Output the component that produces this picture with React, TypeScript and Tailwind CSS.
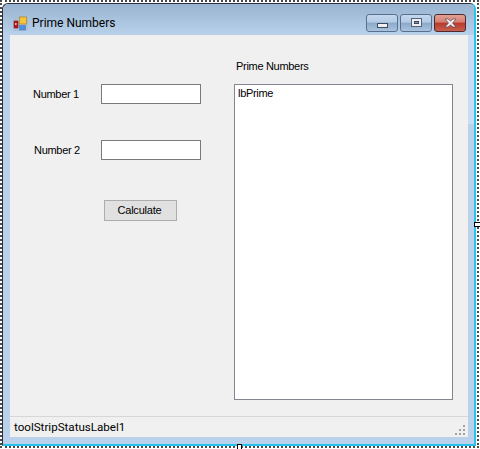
import React from 'react';

const uiFont = 'font-["Liberation_Sans",Arial,sans-serif]';
const captionFont = 'font-["Roboto","Noto_Sans",sans-serif]';

function AppIcon() {
  return (
    <svg width="15" height="15" viewBox="0 0 15 15" className="shrink-0">
      <rect x="0" y="0" width="15" height="15" fill="#a9bdd6" opacity="0.6" />
      <rect x="1" y="5" width="4" height="7" fill="#b5151a" stroke="#7d1d20" strokeWidth="0.6" />
      <rect x="2" y="7" width="1.6" height="2" fill="#f3b4a8" />
      <rect x="6.5" y="1" width="7" height="7" fill="#f6c539" stroke="#b08a2a" strokeWidth="0.8" />
      <rect x="6.5" y="9.5" width="6" height="4.5" fill="#4d8fe0" stroke="#4f78b4" strokeWidth="0.6" />
    </svg>
  );
}

function CaptionButton({ kind }: { kind: 'min' | 'max' | 'close' }) {
  if (kind === 'close') {
    return (
      <div className="flex h-[18px] w-[32px] items-center justify-center rounded-[3px] border border-[#50282e] bg-[linear-gradient(#e2a195_0%,#d47f70_45%,#b8392a_50%,#c8604e_100%)]">
        <svg width="13" height="10" viewBox="0 0 13 10">
          <path d="M1 1h3l2.5 2L9 1h3L8.5 5 12 9H9L6.5 7 4 9H1l3.5-4z" fill="#f0eff2" stroke="#5a4a52" strokeWidth="0.7" />
        </svg>
      </div>
    );
  }
  return (
    <div className="flex h-[18px] w-[32px] items-center justify-center rounded-[3px] border border-[#5a6e8e] bg-[linear-gradient(#c4d8ee_0%,#b3cbe5_45%,#8ba8c8_50%,#aac4e0_100%)]">
      {kind === 'min' ? (
        <div className="mt-[4px] h-[5px] w-[11px] border border-[#3c4a5e] bg-[#f0f0f2]" />
      ) : (
        <div className="mb-[1px] flex h-[9px] w-[11px] items-center justify-center border border-[#56647a] bg-[#eceef2]">
          <div className="h-[3px] w-[5px] border border-[#3c4a5e] bg-[#7f97b6]" />
        </div>
      )}
    </div>
  );
}

function SizeGrip() {
  const dots = [
    [8, 0],
    [4, 4],
    [8, 4],
    [0, 8],
    [4, 8],
    [8, 8],
  ];
  return (
    <svg width="10" height="10" viewBox="0 0 10 10">
      {dots.map(([x, y]) => (
        <rect key={`${x}-${y}`} x={x} y={y} width="2" height="2" fill="#a3a3a3" />
      ))}
    </svg>
  );
}

function NumberRow({ label, className, labelClass }: { label: string; className: string; labelClass: string }) {
  return (
    <div className={`flex h-[20px] items-center ${className}`}>
      <span className={`text-[11px] tracking-[-0.3px] text-black ${labelClass}`}>{label}</span>
      <div className="h-[20px] w-[100px] border border-[#7a7a7a] bg-white" />
    </div>
  );
}

export default function App() {
  return (
    <div className="relative h-[449px] w-[480px] overflow-hidden bg-white">
      <div className="h-[448px] w-[479px] border-2 border-dotted border-[#4a4a4a] pt-[1px]">
        <div className="flex h-[443px] w-[474px] flex-col rounded-t-[6px] border-t border-l border-[#2c3038] border-r-2 border-r-[#27c3e8] border-b-2 border-b-[#27c3e8] bg-[#b9d1ea] px-[7px] pb-[7px]">
          <div className="-mx-[7px] flex h-[31px] shrink-0 items-center rounded-t-[6px] bg-[linear-gradient(#99b4d1,#b9d1ea)] pt-[7px] pr-[8px] pl-[10px]">
            <AppIcon />
            <span className={`ml-[4px] flex-1 text-[12px] text-black ${captionFont}`}>Prime Numbers</span>
            <div className="flex gap-[2px]">
              <CaptionButton kind="min" />
              <CaptionButton kind="max" />
              <CaptionButton kind="close" />
            </div>
          </div>
          <div className={`flex w-[458px] flex-1 flex-col bg-[#f0f0f0] ${uiFont}`}>
            <div className="flex flex-1">
              <div className="flex w-[224px] shrink-0 flex-col pt-[49px]">
                <NumberRow label="Number 1" className="" labelClass="ml-[23px] w-[68px]" />
                <NumberRow label="Number 2" className="mt-[36px]" labelClass="ml-[24px] w-[67px]" />
                <button className="mt-[40px] ml-[94px] h-[21px] w-[73px] border border-[#adadad] bg-[#e1e1e1] pr-[2px] text-[11px] tracking-[-0.2px] text-black">
                  Calculate
                </button>
              </div>
              <div className="flex flex-col pt-[22px]">
                <span className="h-[18px] pl-[2px] text-[11px] leading-[18px] tracking-[-0.3px] text-black">Prime Numbers</span>
                <div className="mt-[9px] h-[316px] w-[219px] border border-[#82878f] bg-white px-[3px] py-[1px] text-[11px] leading-[15px] tracking-[-0.3px] text-black">
                  lbPrime
                </div>
              </div>
            </div>
            <div className={`flex h-[21px] shrink-0 items-center justify-between border-t border-[#d7d7d7] pr-[3px] pl-[4px] ${captionFont}`}>
              <span className="mt-[2px] text-[11.6px] text-black">toolStripStatusLabel1</span>
              <div className="mt-[6px]">
                <SizeGrip />
              </div>
            </div>
          </div>
        </div>
      </div>
      {/* frame highlight and designer handles sit over the window */}
      <div className="absolute top-[35px] left-[468px] h-[89px] w-[6px] bg-[#c9def4]" />
      <div className="absolute top-[222px] left-[474px] h-[5px] w-[8px] border border-black bg-white" />
      <div className="absolute top-[444px] left-[237px] h-[8px] w-[5px] border border-black bg-white" />
    </div>
  );
}
